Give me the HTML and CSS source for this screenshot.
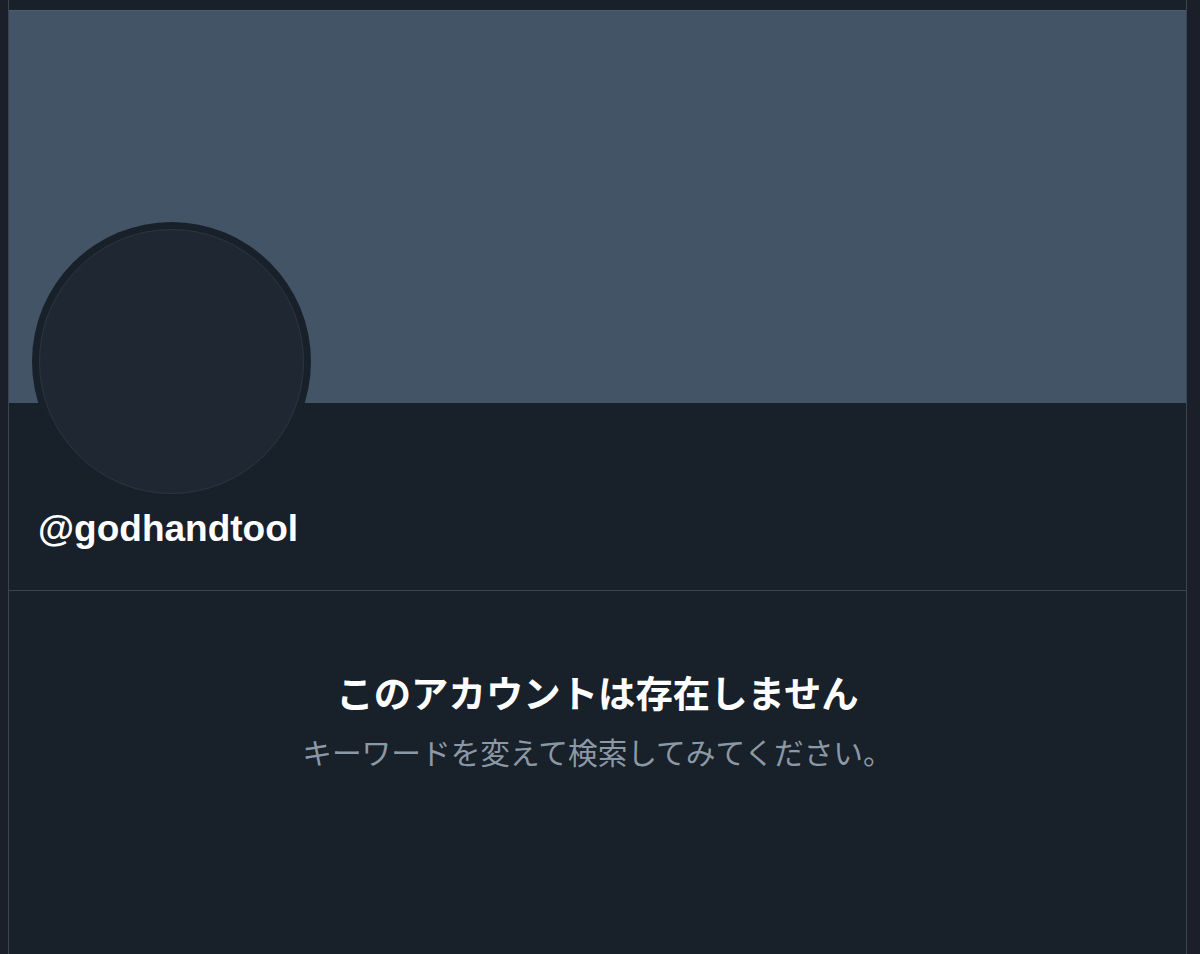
FILE: index.html
```html
<!DOCTYPE html>
<html lang="ja">
<head>
<meta charset="utf-8">
<title>@godhandtool</title>
<link rel="stylesheet" href="styles.css">
</head>
<body>
<main class="column">
  <div class="banner"></div>
  <div class="avatar"><div class="avatar-inner"></div></div>
  <div class="name">@godhandtool</div>
  <section class="empty">
    <h1 class="empty-title">このアカウントは存在しません</h1>
    <p class="empty-text">キーワードを変えて検索してみてください。</p>
  </section>
</main>
</body>
</html>
```
FILE: styles.css
```css
html, body {
  margin: 0;
  padding: 0;
  background: #1a1f29;
  height: 100%;
}
body {
  font-family: "Liberation Sans", "Noto Sans CJK JP", sans-serif;
  color: #f7f9f9;
}
.column {
  margin-left: 8px;
  width: 1179px;
  min-height: 954px;
  box-sizing: border-box;
  border-left: 1px solid #3b4450;
  border-right: 1px solid #3b4450;
  background: #18202a;
  padding-top: 10px;
}
.banner {
  height: 393px;
  background: #435466;
  border-top: 1px solid #4c5d6f;
  box-sizing: border-box;
}
.avatar {
  width: 279px;
  height: 279px;
  margin-top: -181px;
  margin-left: 23px;
  border-radius: 50%;
  background: #18202a;
  padding: 7px;
  box-sizing: border-box;
}
.avatar-inner {
  width: 100%;
  height: 100%;
  border-radius: 50%;
  background: #1e2732;
  border: 1px solid #2c3643;
  box-sizing: border-box;
}
.name {
  margin-top: 6px;
  padding-left: 29px;
  padding-bottom: 39px;
  font-size: 37px;
  line-height: 44px;
  font-weight: bold;
  color: #ffffff;
  border-bottom: 1px solid #3b4450;
}
.empty {
  text-align: center;
  padding-top: 77px;
}
.empty-title {
  margin: 0;
  font-family: "Noto Sans CJK JP", sans-serif;
  font-size: 37.4px;
  line-height: 48px;
  font-weight: bold;
  color: #ffffff;
}
.empty-text {
  margin: 18px 0 0;
  font-family: "Noto Sans CJK JP", sans-serif;
  font-size: 29.7px;
  line-height: 36px;
  color: #8b98a5;
}
```
